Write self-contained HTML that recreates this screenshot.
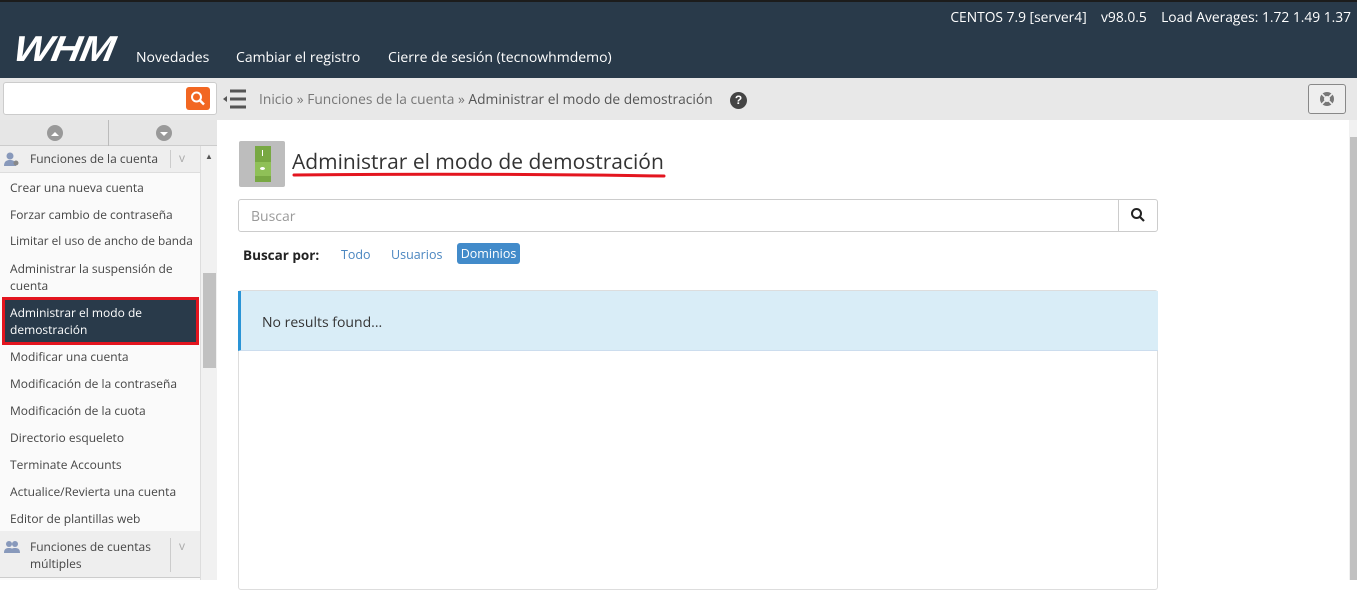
<!DOCTYPE html>
<html><head><meta charset="utf-8"><style>
*{box-sizing:border-box;margin:0;padding:0}
body{width:1357px;height:580px;overflow:hidden;font-family:"Open Sans","Liberation Sans",sans-serif;background:#fff;position:relative;color:#333}
.top{position:absolute;left:0;top:0;width:1357px;height:78px;background:#293a4a;border-top:2px solid #1c1c1c;color:#fff}
.abs{position:absolute;white-space:nowrap}
.crumb{position:absolute;left:0;top:78px;width:1357px;height:42px;background:#e8e8e8}
.side{position:absolute;left:0;top:120px;width:201px;height:460px;background:#fafafa;border-right:1px solid #ddd}
.side .it{position:absolute;left:10px;font-size:12px;color:#444;line-height:17px;white-space:nowrap}
</style></head><body>
<div class="top">
 <div class="abs" style="left:14px;top:26px;font:italic 900 36px 'Liberation Sans',sans-serif;letter-spacing:-1px;transform:skewX(-10deg) scaleX(1.15);transform-origin:left">WHM</div>
 <div class="abs" style="left:136px;top:46px;font-size:14px">Novedades</div>
 <div class="abs" style="left:236px;top:46px;font-size:14px">Cambiar el registro</div>
 <div class="abs" style="left:388px;top:46px;font-size:14px">Cierre de sesión (tecnowhmdemo)</div>
 <div class="abs" style="right:6px;top:6px;font-size:13.8px">CENTOS 7.9 [server4]&nbsp;&nbsp;&nbsp; v98.0.5&nbsp;&nbsp;&nbsp; Load Averages: 1.72 1.49 1.37</div>
</div>
<div class="crumb">
 <div class="abs" style="left:3px;top:4px;width:214px;height:33px;background:#fff;border:1px solid #ccc;border-radius:3px"></div>
 <div class="abs" style="left:186px;top:9px;width:24px;height:23px;background:#f26722;border-radius:3px">
  <svg width="24" height="23"><circle cx="10.5" cy="10" r="4.5" stroke="#fff" stroke-width="2" fill="none"/><path d="M14 13.5l4 4" stroke="#fff" stroke-width="2.5"/></svg></div>
 <svg class="abs" style="left:222px;top:10px" width="26" height="22"><path d="M8 3h16M8 11h16M8 19h16" stroke="#555" stroke-width="3"/><path d="M1 11l4-3v6z" fill="#555"/></svg>
 <div class="abs" style="left:259px;top:12px;font-size:13.8px;color:#777">Inicio » Funciones de la cuenta » <span style="color:#555">Administrar el modo de demostración</span></div>
 <div class="abs" style="left:730px;top:14px;width:17px;height:17px;border-radius:50%;background:#444;color:#fff;font:bold 12px 'Liberation Sans';text-align:center;line-height:17px">?</div>
 <div class="abs" style="left:1308px;top:6px;width:38px;height:30px;border:1px solid #888;border-radius:3px;background:#eee">
  <svg width="36" height="28"><circle cx="18" cy="14" r="7" fill="#777"/><circle cx="18" cy="14" r="3" fill="#eee"/><path d="M13 9l3 3M23 9l-3 3M13 19l3-3M23 19l-3-3" stroke="#eee" stroke-width="1.6"/></svg></div>
</div>
<div class="side">
 <div class="abs" style="left:0;top:0;width:217px;height:26px;background:#e6e6e6;border-bottom:1px solid #ccc"></div>
 <div class="abs" style="left:108px;top:0;width:1px;height:26px;background:#bbb"></div>
 <div class="abs" style="left:47px;top:5px;width:16px;height:16px;border-radius:50%;background:#999"><svg width="16" height="16"><path d="M4 10l4-4 4 4z" fill="#fff"/></svg></div>
 <div class="abs" style="left:156px;top:5px;width:16px;height:16px;border-radius:50%;background:#999"><svg width="16" height="16"><path d="M4 6l4 4 4-4z" fill="#fff"/></svg></div>
 <div class="abs" style="left:0;top:26px;width:200px;height:27px;background:#eee;border-bottom:1px solid #ddd"></div>
 <svg class="abs" style="left:4px;top:31px" width="16" height="16"><circle cx="6" cy="5" r="3.5" fill="#8899bb"/><path d="M0 15c0-5 3-6 6-6s6 1 6 6z" fill="#8899bb"/><circle cx="12" cy="12" r="2.5" fill="#888"/></svg>
 <div class="it" style="left:30px;top:30px;color:#444">Funciones de la cuenta</div>
 <div class="abs" style="left:170px;top:30px;width:1px;height:18px;background:#ccc"></div>
 <div class="it" style="left:179px;top:29px;color:#aaa">v</div>
 <div class="it" style="top:59px">Crear una nueva cuenta</div>
 <div class="it" style="top:86px">Forzar cambio de contraseña</div>
 <div class="it" style="top:113px;font-size:11.8px">Limitar el uso de ancho de banda</div>
 <div class="it" style="top:140px">Administrar la suspensión de<br>cuenta</div>
 <div class="abs" style="left:2px;top:177px;width:197px;height:48px;background:#293a4a;border:3px solid #e3151f"></div>
 <div class="it" style="top:184px;color:#fff">Administrar el modo de<br>demostración</div>
 <div class="it" style="top:228px">Modificar una cuenta</div>
 <div class="it" style="top:255px">Modificación de la contraseña</div>
 <div class="it" style="top:282px">Modificación de la cuota</div>
 <div class="it" style="top:309px">Directorio esqueleto</div>
 <div class="it" style="top:336px">Terminate Accounts</div>
 <div class="it" style="top:363px">Actualice/Revierta una cuenta</div>
 <div class="it" style="top:390px">Editor de plantillas web</div>
 <div class="abs" style="left:0;top:411px;width:200px;height:47px;background:#eee;border-bottom:1px solid #ccc"></div>
 <svg class="abs" style="left:4px;top:420px" width="16" height="14"><circle cx="5" cy="4" r="3" fill="#8899bb"/><circle cx="11" cy="4" r="3" fill="#8899bb"/><path d="M0 13c0-4 2-5 5-5s5 1 5 5zM6 13c0-4 2-5 5-5s5 1 5 5z" fill="#8899bb"/></svg>
 <div class="it" style="left:30px;top:418px">Funciones de cuentas<br>múltiples</div>
 <div class="abs" style="left:170px;top:418px;width:1px;height:34px;background:#ccc"></div>
 <div class="it" style="left:179px;top:417px;color:#aaa">v</div>
</div>
<div class="abs" style="left:201px;top:146px;width:16px;height:434px;background:#f1f1f1"></div>
<div class="abs" style="left:203px;top:273px;width:13px;height:95px;background:#c1c1c1"></div>
<div class="abs" style="left:205px;top:151px;font-size:8px;color:#555">▲</div>
<div class="abs" style="left:1349px;top:120px;width:8px;height:460px;background:#f1f1f1"></div>
<div class="abs" style="left:1350px;top:137px;width:7px;height:443px;background:#c1c1c1"></div>
<!-- content -->
<div class="abs" style="left:239px;top:141px;width:46px;height:46px;background:#bdbdbd;border-radius:2px"></div>
<div class="abs" style="left:255px;top:146px;width:16px;height:36px;background:#78a843"></div>
<div class="abs" style="left:255px;top:162px;width:16px;height:14px;background:#8fc057"></div>
<div class="abs" style="left:262px;top:150px;width:1px;height:6px;background:#fff"></div>
<div class="abs" style="left:260px;top:167px;width:5px;height:3px;background:#fff;border-radius:50%"></div>
<div class="abs" style="left:292px;top:148px;font-size:21px;color:#333">Administrar el modo de demostración</div>
<svg class="abs" style="left:290px;top:170px" width="380" height="10"><path d="M4 5Q180 3 374 6" stroke="#e3151f" stroke-width="3" fill="none" stroke-linecap="round"/></svg>
<div class="abs" style="left:238px;top:199px;width:920px;height:33px;border:1px solid #ccc;border-radius:3px"></div>
<div class="abs" style="left:1118px;top:199px;width:1px;height:33px;background:#ccc"></div>
<div class="abs" style="left:251px;top:207px;font-size:14px;color:#999">Buscar</div>
<svg class="abs" style="left:1130px;top:207px" width="16" height="16"><circle cx="6.5" cy="6.5" r="4.5" stroke="#222" stroke-width="2" fill="none"/><path d="M10 10l4 4" stroke="#222" stroke-width="2.2"/></svg>
<div class="abs" style="left:243px;top:246px;font-size:13.5px;font-weight:bold;color:#222">Buscar por:</div>
<div class="abs" style="left:341px;top:246px;font-size:12.5px;color:#4a86c0">Todo</div>
<div class="abs" style="left:391px;top:246px;font-size:12.5px;color:#4a86c0">Usuarios</div>
<div class="abs" style="left:457px;top:243px;width:63px;height:21px;background:#428bca;border-radius:3px;color:#fff;font-size:12.5px;text-align:center;line-height:21px">Dominios</div>
<div class="abs" style="left:238px;top:290px;width:920px;height:300px;border:1px solid #ddd;border-radius:3px"></div>
<div class="abs" style="left:238px;top:291px;width:920px;height:60px;background:#d9edf7;border-left:3px solid #2a94d6;border-bottom:1px solid #cde"></div>
<div class="abs" style="left:262px;top:313px;font-size:14px;color:#333">No results found...</div>
</body></html>
